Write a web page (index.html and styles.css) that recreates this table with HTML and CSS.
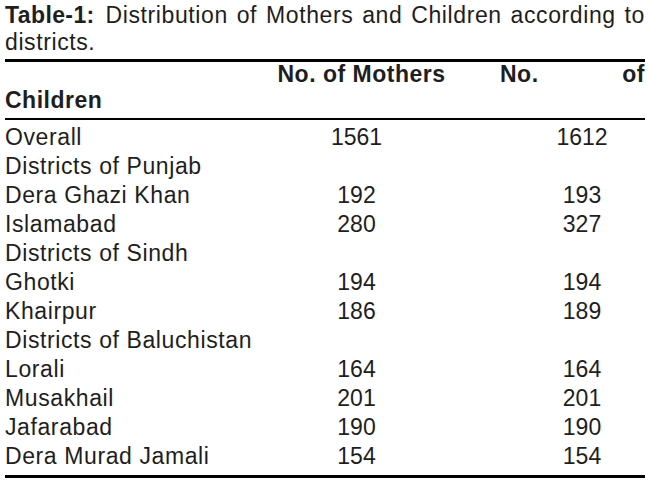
FILE: index.html
```html
<!DOCTYPE html>
<html lang="en">
<head>
<meta charset="utf-8">
<title>Table-1</title>
<link rel="stylesheet" href="styles.css">
</head>
<body>
<div class="page">
  <p class="caption"><b class="label">Table-1:</b> <span class="caption-text">Distribution of Mothers and Children according to districts.</span></p>
  <div class="tbl">
    <div class="head">
      <div class="head-line">
        <span class="h-mothers">No. of Mothers</span>
        <span class="h-children"><span>No.</span><span>of</span></span>
      </div>
      <div class="head-line2">Children</div>
    </div>
    <div class="body">
      <div class="row"><span class="name">Overall</span><span class="n1">1561</span><span class="n2">1612</span></div>
      <div class="row"><span class="name">Districts of Punjab</span></div>
      <div class="row"><span class="name">Dera Ghazi Khan</span><span class="n1">192</span><span class="n2">193</span></div>
      <div class="row"><span class="name">Islamabad</span><span class="n1">280</span><span class="n2">327</span></div>
      <div class="row"><span class="name">Districts of Sindh</span></div>
      <div class="row"><span class="name">Ghotki</span><span class="n1">194</span><span class="n2">194</span></div>
      <div class="row"><span class="name">Khairpur</span><span class="n1">186</span><span class="n2">189</span></div>
      <div class="row"><span class="name">Districts of Baluchistan</span></div>
      <div class="row"><span class="name">Lorali</span><span class="n1">164</span><span class="n2">164</span></div>
      <div class="row"><span class="name">Musakhail</span><span class="n1">201</span><span class="n2">201</span></div>
      <div class="row"><span class="name">Jafarabad</span><span class="n1">190</span><span class="n2">190</span></div>
      <div class="row"><span class="name">Dera Murad Jamali</span><span class="n1">154</span><span class="n2">154</span></div>
    </div>
  </div>
</div>
</body>
</html>
```
FILE: styles.css
```css
html, body {
  margin: 0;
  padding: 0;
  background: #ffffff;
}
body {
  font-family: "Liberation Sans", Arial, sans-serif;
  font-size: 23px;
  color: #1e1e1e;
}
.page {
  width: 640px;
  padding: 2px 0 0 5px;
}
.caption {
  margin: 0;
  line-height: 27px;
  text-align: justify;
  letter-spacing: 0.6px;
}
.label {
  font-weight: bold;
  letter-spacing: 0.4px;
  margin-right: 2px;
}
.tbl {
  margin-top: 3px;
  border-top: 3px solid #000;
  border-bottom: 3px solid #000;
}
.head {
  font-weight: bold;
  letter-spacing: 0.5px;
  border-bottom: 2px solid #000;
  padding-bottom: 4px;
}
.head-line {
  display: grid;
  grid-template-columns: 270px 173px 52px 145px;
  line-height: 25px;
}
.h-mothers {
  grid-column: 2;
  text-align: center;
}
.h-children {
  grid-column: 4;
  display: flex;
  justify-content: space-between;
}
.head-line2 {
  line-height: 27px;
}
.body {
  padding: 3px 0 4px;
}
.row {
  display: grid;
  grid-template-columns: 265px 173px 76px 126px;
  line-height: 29px;
  height: 29px;
}
.name {
  grid-column: 1;
  white-space: nowrap;
  letter-spacing: 0.6px;
}
.n1 {
  grid-column: 2;
  text-align: center;
}
.n2 {
  grid-column: 4;
  text-align: center;
}
```
